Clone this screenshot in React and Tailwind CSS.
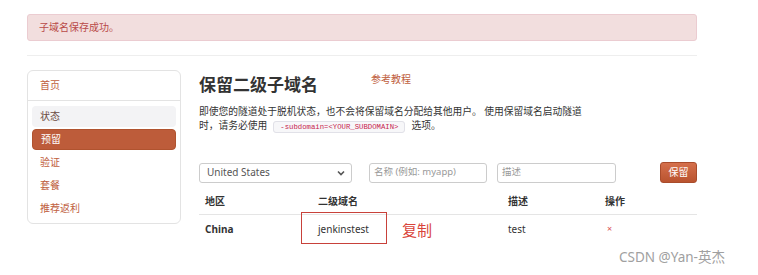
import React from 'react';

const CJK = '"Noto Sans", "Noto Sans CJK SC", sans-serif';

const navItems = [
    { label: '状态', state: 'hover' },
    { label: '预留', state: 'active' },
    { label: '验证' },
    { label: '套餐' },
    { label: '推荐返利' },
];

const Sidebar = () => (
    <div className="w-[154px] h-[154px] shrink-0 border border-[#e3e3e3] rounded-[6px] bg-white">
        <div className="h-[30px] flex items-center pl-[12px] text-[10px] text-[#c0603e] border-b border-[#e3e3e3]">
            首页
        </div>
        <div className="flex flex-col gap-[2px] px-[4px] pt-[5px]">
            {navItems.map((item) => (
                <div
                    key={item.label}
                    className={
                        item.state === 'active'
                            ? 'h-[21px] flex items-center pl-[8px] text-[10px] text-white bg-[#bd5c3a] border border-[#b0532f] rounded-[4px]'
                            : item.state === 'hover'
                            ? 'h-[21px] flex items-center pl-[8px] text-[10px] text-[#6b4a42] bg-[#f3f3f5] rounded-[4px]'
                            : 'h-[21px] flex items-center pl-[8px] text-[10px] text-[#c0603e]'
                    }
                >
                    {item.label}
                </div>
            ))}
        </div>
    </div>
);

const Chevron = () => (
    <svg width="8" height="6" viewBox="0 0 8 6" className="text-[#555]">
        <path d="M1 1.5 L4 4.5 L7 1.5" fill="none" stroke="currentColor" strokeWidth="1.6" />
    </svg>
);

export default function App() {
    return (
        <div className="w-[758px] h-[275px] bg-white relative overflow-hidden" style={{ fontFamily: CJK }}>
            <div className="pl-[27px] pt-[14px] w-[697px]">
                <div className="h-[27px] flex items-center pl-[11px] bg-[#f2dede] border border-[#ebccd1] rounded-[3px] text-[10px] text-[#b94a48]">
                    子域名保存成功。
                </div>
                <div className="mt-[14px] h-px bg-[#eeeeee]" />

                <div className="flex mt-[14px]">
                    <Sidebar />

                    <div className="ml-[18px] flex-1">
                        <div className="h-[30px] flex items-center">
                            <h1 className="text-[17px] font-bold text-[#333]">保留二级子域名</h1>
                            <a className="ml-[53px] self-start mt-[2px] text-[10px] text-[#c0603e]">参考教程</a>
                        </div>

                        <p className="mt-[5px] text-[9.75px] leading-[14px] text-[#333] whitespace-nowrap">
                            即使您的隧道处于脱机状态，也不会将保留域名分配给其他用户。 使用保留域名启动隧道
                            <br />
                            时，请务必使用
                            <code
                                className="mx-[6px] px-[6px] py-[1px] bg-[#f7f7f9] border border-[#e1e1e8] rounded-[3px] text-[7.3px] text-[#c7254e]"
                                style={{ fontFamily: '"Liberation Mono", monospace' }}
                            >
                                -subdomain=&lt;YOUR_SUBDOMAIN&gt;
                            </code>
                            选项。
                        </p>

                        <div className="mt-[28px] flex items-center h-[21px]">
                            <div className="w-[153px] h-[20px] border border-[#cccccc] rounded-[3px] flex items-center justify-between pl-[7px] pr-[6px] text-[10px] text-[#555]">
                                <span>United States</span>
                                <Chevron />
                            </div>
                            <div className="ml-[17px] w-[118px] h-[20px] border border-[#cccccc] rounded-[3px] flex items-center pl-[4px] text-[9.5px] text-[#999]">
                                名称 (例如: myapp)
                            </div>
                            <div className="ml-[10px] w-[119px] h-[20px] border border-[#cccccc] rounded-[3px] flex items-center pl-[4px] text-[9.5px] text-[#999]">
                                描述
                            </div>
                            <button className="ml-auto w-[37px] h-[21px] rounded-[3px] bg-gradient-to-b from-[#d5704c] to-[#b9532f] border border-[#a94c2c] text-[10px] text-white flex items-center justify-center">
                                保留
                            </button>
                        </div>

                        <div className="mt-[6px] grid grid-cols-[113px_190px_97px_98px] h-[26px] items-center border-b border-[#e5e5e5] text-[10px] font-bold text-[#333]">
                            <div className="pl-[6px]">地区</div>
                            <div className="pl-[6px]">二级域名</div>
                            <div className="pl-[6px]">描述</div>
                            <div className="pl-[6px]">操作</div>
                        </div>
                        <div className="grid grid-cols-[113px_190px_97px_98px] h-[28px] items-center text-[10px] text-[#333]">
                            <div className="pl-[6px] font-bold">China</div>
                            <div className="pl-[6px] relative">
                                jenkinstest
                                <span className="absolute left-[-11px] top-[-10px] w-[86px] h-[32px] border-[1.5px] border-[#c8413a]" />
                                <span className="absolute left-[90px] top-[-2px] text-[15px] text-[#d9443a] leading-[20px]">复制</span>
                            </div>
                            <div className="pl-[6px]">test</div>
                            <div className="pl-[8px] text-[9px] text-[#d9534f]">×</div>
                        </div>
                    </div>
                </div>
            </div>

            <div className="absolute left-[619px] top-[248px] text-[13.5px] text-[#a0a0a0] leading-[18px]">
                CSDN @Yan-英杰
            </div>
        </div>
    );
}
